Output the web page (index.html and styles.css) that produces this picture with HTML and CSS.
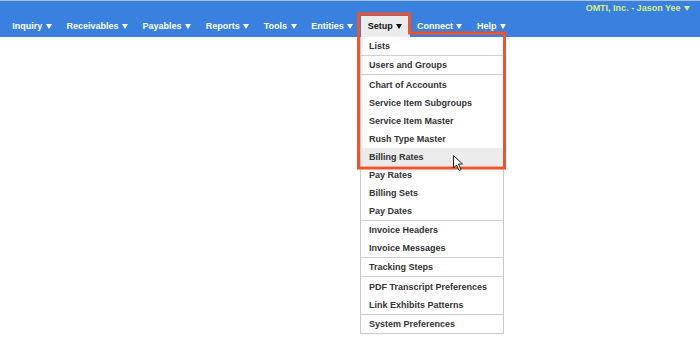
FILE: index.html
```html
<!DOCTYPE html>
<html lang="en">
<head>
  <meta charset="UTF-8">
  <meta name="viewport" content="width=device-width, initial-scale=1.0">
  <title>Setup</title>
  <link rel="stylesheet" href="styles.css">
</head>
<body>
  <header class="topbar">
    <div class="user">OMTI, Inc. - Jason Yee <span class="caret"></span></div>
    <nav class="menu">
      <div class="menu-item">Inquiry <span class="caret"></span></div>
      <div class="menu-item">Receivables <span class="caret"></span></div>
      <div class="menu-item">Payables <span class="caret"></span></div>
      <div class="menu-item">Reports <span class="caret"></span></div>
      <div class="menu-item">Tools <span class="caret"></span></div>
      <div class="menu-item">Entities <span class="caret"></span></div>
      <div class="menu-item current">Setup <span class="caret"></span></div>
      <div class="menu-item">Connect <span class="caret"></span></div>
      <div class="menu-item">Help <span class="caret"></span></div>
    </nav>
  </header>

  <main class="content">
    <div class="setup-list">
      <div class="sl-item">Lists</div>
      <div class="sl-item sep">Users and Groups</div>
      <div class="sl-item sep">Chart of Accounts</div>
      <div class="sl-item">Service Item Subgroups</div>
      <div class="sl-item">Service Item Master</div>
      <div class="sl-item">Rush Type Master</div>
      <div class="sl-item selected">Billing Rates</div>
      <div class="sl-item">Pay Rates</div>
      <div class="sl-item">Billing Sets</div>
      <div class="sl-item">Pay Dates</div>
      <div class="sl-item sep">Invoice Headers</div>
      <div class="sl-item">Invoice Messages</div>
      <div class="sl-item sep">Tracking Steps</div>
      <div class="sl-item sep">PDF Transcript Preferences</div>
      <div class="sl-item">Link Exhibits Patterns</div>
      <div class="sl-item sep">System Preferences</div>
    </div>
  </main>

  <!-- marcação em volta do menu Setup + cursor -->
  <svg class="overlay" width="700" height="338" viewBox="0 0 700 338">
    <path d="M358.5 14 H409.5 V33 H504.5 V168 H358.5 Z" fill="none" stroke="#f0522a" stroke-width="3"/>
    <path d="M453.5 155.5 V168 L456.5 165 L459 170.5 L461 169.5 L458.5 164 L462.5 164 Z" fill="#fff" stroke="#222" stroke-width="1" stroke-linejoin="round"/>
  </svg>
</body>
</html>
```

FILE: styles.css
```css
body {
  margin: 0;
  padding: 0;
  font-family: "Liberation Sans", Arial, sans-serif;
  background-color: #fff;
}

.topbar {
  display: flex;
  flex-direction: column;
  height: 36px;
  background-color: #3a80df;
  border-top: 1px solid #a9bfdc;
}

.user {
  align-self: flex-end;
  height: 15px;
  line-height: 15px;
  padding-right: 10px;
  font-size: 9px;
  font-weight: bold;
  color: #d4f07c;
}

.menu {
  display: flex;
  padding-left: 5px;
  height: 21px;
}

.menu-item {
  padding: 1px 7.3px 1px;
  line-height: 19px;
  font-size: 9px;
  font-weight: bold;
  color: #fff;
  white-space: nowrap;
}

.menu-item.current {
  background-color: #ececec;
  color: #111;
}

.caret {
  display: inline-block;
  width: 0;
  height: 0;
  margin-left: 1px;
  border-left: 3px solid transparent;
  border-right: 3px solid transparent;
  border-top: 5px solid currentColor;
  vertical-align: middle;
}

.content {
  padding-left: 360px;
}

.setup-list {
  width: 142px;
  background-color: #fff;
  border: 1px solid #ccc;
  border-top: none;
  font-size: 9px;
}

.sl-item {
  height: 18px;
  line-height: 18px;
  padding-left: 8px;
  color: #333;
  font-weight: bold;
  white-space: nowrap;
}

.sl-item.sep {
  border-top: 1px solid #d0d0d0;
  padding-top: 0.35px;
}

.sl-item.selected {
  background-color: #ebebeb;
}

.overlay {
  position: absolute;
  top: 0;
  left: 0;
  pointer-events: none;
}
```
